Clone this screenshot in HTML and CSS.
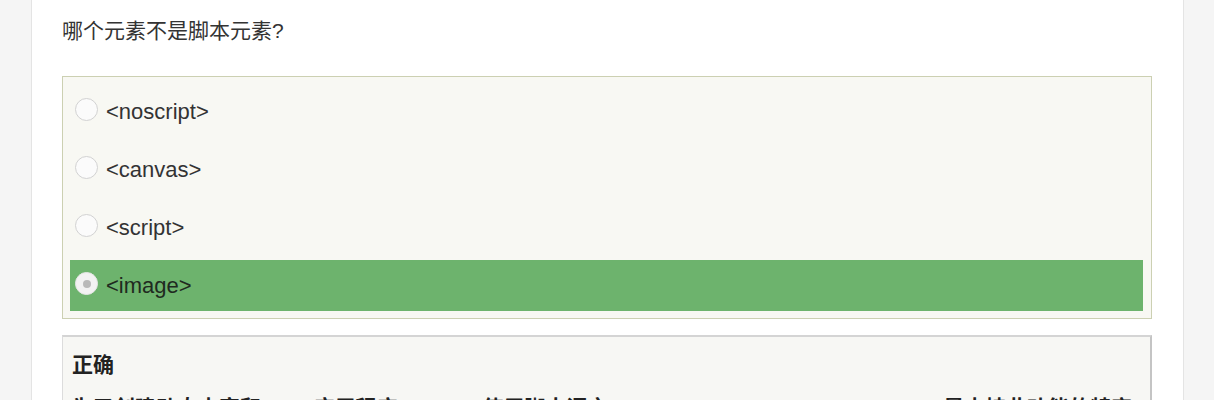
FILE: index.html
```html
<!DOCTYPE html>
<html lang="zh">
<head>
<meta charset="utf-8">
<link rel="stylesheet" href="styles.css">
</head>
<body>
<div class="page">
  <div class="side side-left"></div>
  <main class="content">
    <p class="question">哪个元素不是脚本元素?</p>
    <div class="options">
      <div class="option"><span class="radio"></span><span class="label">&lt;noscript&gt;</span></div>
      <div class="option"><span class="radio"></span><span class="label">&lt;canvas&gt;</span></div>
      <div class="option"><span class="radio"></span><span class="label">&lt;script&gt;</span></div>
      <div class="option selected"><span class="radio checked"></span><span class="label">&lt;image&gt;</span></div>
    </div>
    <div class="explain">
      <p class="verdict">正确</p>
      <p class="reason">为了创建动态内容和 web 应用程序，HTML 使用脚本语言。&lt;script&gt;, &lt;noscript&gt;, &lt;canvas&gt; 是支持此功能的特定元素。</p>
    </div>
  </main>
  <div class="side side-right"></div>
</div>
</body>
</html>
```
FILE: styles.css
```css
html, body {
  margin: 0;
  padding: 0;
  height: 400px;
  overflow: hidden;
  background: #ffffff;
}
body {
  font-family: "Liberation Sans", "Noto Sans CJK SC", sans-serif;
  color: #333333;
}
.page {
  display: flex;
  width: 1214px;
  height: 400px;
}
.side {
  background: #f5f5f5;
}
.side-left {
  width: 31px;
  border-right: 1px solid #e4e4e4;
}
.side-right {
  flex: 1;
  border-left: 1px solid #e4e4e4;
}
.content {
  width: 1151px;
  padding: 0 30px 0 30px;
  box-sizing: border-box;
  background: #ffffff;
}
.question {
  margin: 17px 0 0 0;
  font-size: 21px;
  line-height: 28px;
  color: #333333;
}
.options {
  margin-top: 31px;
  width: 1090px;
  box-sizing: border-box;
  border: 1px solid #ccd0b2;
  background: #f8f8f3;
  padding: 9px 8px 7px 7px;
  display: flex;
  flex-direction: column;
  gap: 7px;
}
.option {
  height: 51px;
  display: flex;
  align-items: center;
  padding-left: 5px;
  gap: 8px;
}
.option .label {
  font-size: 22px;
  color: #333333;
  margin-top: 1px;
}
.option.selected {
  background: #6db36d;
}
.option.selected .label {
  color: #1f2a1f;
}
.radio {
  width: 21px;
  height: 21px;
  border-radius: 50%;
  border: 1.5px solid #d2d2d2;
  background: #fbfbfb;
  margin-top: -4px;
  box-sizing: content-box;
  display: flex;
  align-items: center;
  justify-content: center;
}
.radio.checked {
  background: #f2f2f2;
  border-color: #e6e6e6;
}
.radio.checked::after {
  content: "";
  width: 8px;
  height: 8px;
  border-radius: 50%;
  background: #b9b9b9;
}
.explain {
  margin-top: 16px;
  width: 1090px;
  box-sizing: border-box;
  border-top: 2px solid #d4d4d4;
  border-left: 1px solid #dcdcdc;
  border-right: 2px solid #c4c4c4;
  background: #f7f7f4;
  padding: 14px 10px 10px 9px;
  height: 80px;
}
.verdict {
  margin: 0;
  font-size: 21px;
  line-height: 28px;
  font-weight: bold;
  color: #222222;
}
.reason {
  margin: 14px 0 0 0;
  font-size: 21px;
  line-height: 30px;
  font-weight: bold;
  color: #222222;
}
```
